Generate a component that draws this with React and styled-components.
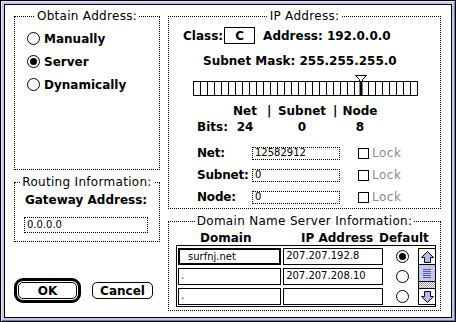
import React from "react";
import styled, { createGlobalStyle } from "styled-components";

const GlobalStyle = createGlobalStyle`
  html, body { margin: 0; padding: 0; background: #fff; }
  body { font-family: "DejaVu Sans", sans-serif; color: #000; }
`;

// window frame
const Window = styled.div`
  box-sizing: border-box;
  width: 456px;
  height: 322px;
  border: 1px solid #000;
  background: #c4c4ee;
  padding: 3px;
  box-shadow: inset 1px 1px 0 #e8e8ff, inset -1px -1px 0 #7c7cac;
  display: flex;
`;

const Content = styled.div`
  flex: 1;
  border: 1px solid #000;
  background: #fff;
  display: grid;
  grid-template-columns: 146px 273px;
  column-gap: 8px;
  align-items: start;
  padding: 4px 0 0 9px;
`;

const Column = styled.div`
  display: flex;
  flex-direction: column;
  gap: 5px;
`;

const Group = styled.fieldset`
  box-sizing: border-box;
  margin: 0;
  min-width: 0;
  height: ${(p) => p.$h}px;
  border: 1px dotted #000;
  padding: ${(p) => p.$pad || "0"};
`;

const GroupTitle = styled.legend`
  margin: 0 auto;
  padding: 0 2px;
  font-size: 12px;
  line-height: 14px;
  letter-spacing: 0.3px;
`;

const Bold = styled.span`
  font-weight: bold;
  font-size: 12px;
  line-height: 14px;
  white-space: nowrap;
`;

/* radios & checkboxes */
const RadioDot = styled.span`
  box-sizing: border-box;
  flex: none;
  width: 13px;
  height: 13px;
  border: 1px solid #000;
  border-radius: 50%;
  background: #fff;
  display: inline-flex;
  align-items: center;
  justify-content: center;

  &::after {
    content: "";
    width: 7px;
    height: 7px;
    border-radius: 50%;
    background: #000;
    display: ${(p) => (p.$on ? "block" : "none")};
  }
`;

const RadioRow = styled.label`
  display: flex;
  align-items: center;
  gap: 4px;
  height: 23px;
`;

const CheckBox = styled.span`
  box-sizing: border-box;
  width: 11px;
  height: 11px;
  border: 1px solid #000;
  background: #fff;
`;

const Dimmed = styled.span`
  font-size: 12px;
  color: #8c8c8c;
  letter-spacing: 0.5px;
`;

/* left column */
const RadioList = styled.div`
  padding: 4px 0 0 12px;
`;

const GatewayLabel = styled.div`
  text-align: center;
  margin-right: 2px;
`;

const TextField = styled.div`
  box-sizing: border-box;
  width: ${(p) => p.$w}px;
  height: ${(p) => p.$h || 16}px;
  border: ${(p) => (p.$active ? "2px solid #000" : p.$dotted ? "1px dotted #000" : "1px solid #000")};
  padding-left: ${(p) => p.$indent || 2}px;
  font-size: 10px;
  line-height: ${(p) => (p.$h || 16) - 3}px;
  white-space: nowrap;
  overflow: hidden;
`;

const GatewayField = styled(TextField)`
  margin: 9px 0 0 9px;
`;

const ButtonRow = styled.div`
  display: flex;
  align-items: center;
  gap: 11px;
  margin-top: 31px;
`;

const DefaultRing = styled.div`
  box-sizing: border-box;
  width: 67px;
  height: 25px;
  border: 3px solid #000;
  border-radius: 9px;
  padding: 1px;
  display: flex;
`;

const Button = styled.button`
  box-sizing: border-box;
  flex: ${(p) => (p.$fill ? 1 : "none")};
  width: ${(p) => (p.$w ? `${p.$w}px` : "auto")};
  height: ${(p) => (p.$h ? `${p.$h}px` : "auto")};
  margin: 0;
  padding: 0;
  border: 1px solid #000;
  border-radius: 5px;
  background: #fff;
  color: #000;
  font-family: "DejaVu Sans", sans-serif;
  font-weight: bold;
  font-size: 12px;
  cursor: pointer;
`;

/* IP address group */
const Row = styled.div`
  display: flex;
  align-items: center;
  margin-top: ${(p) => p.$top || 0}px;
  padding-left: ${(p) => p.$indent || 0}px;
`;

const ClassBox = styled.span`
  box-sizing: border-box;
  width: 31px;
  height: 17px;
  margin: 0 8px 0 1px;
  border: 1px solid #000;
  display: inline-flex;
  align-items: center;
  justify-content: center;
  font-weight: bold;
  font-size: 12px;
`;

const SliderWrap = styled.div`
  position: relative;
  width: 225px;
  margin: 7px 0 0 24px;
  padding-top: 6px;
`;

const Track = styled.div`
  box-sizing: border-box;
  height: 15px;
  border: 1px solid #000;
  background: repeating-linear-gradient(to right, #fff 0 6px, #000 6px 7px);
`;

const Marker = styled.svg`
  position: absolute;
  left: 162px;
  top: 0;
`;

const BitsGrid = styled.div`
  display: grid;
  grid-template-columns: 26px 44px 4px 62px 4px 46px;
  row-gap: 2px;
  margin: 8px 0 8px 0;
  padding-left: 28px;
  font-weight: bold;
  font-size: 12px;
  line-height: 14px;
`;

const Cell = styled.span`
  text-align: ${(p) => p.$align || "center"};
  white-space: nowrap;
`;

const FieldRow = styled.div`
  display: flex;
  align-items: center;
  height: 22px;
  padding-left: 28px;
`;

const FieldLabel = styled(Bold)`
  width: 55px;
  letter-spacing: -0.2px;
`;

const LockBox = styled.span`
  display: flex;
  align-items: center;
  gap: 3px;
  margin-left: 18px;
`;

/* DNS group */
const HeadRow = styled.div`
  display: flex;
  margin: 3px 0 0 31px;
  font-weight: bold;
  font-size: 12px;
  line-height: 14px;
`;

const HeadCell = styled.span`
  width: ${(p) => (p.$w ? `${p.$w}px` : "auto")};
  white-space: nowrap;
`;

const Table = styled.div`
  box-sizing: border-box;
  width: 260px;
  margin-left: 7px;
  border: 1px solid #000;
  padding: 2px 0 1px 1px;
  display: flex;
`;

const Rows = styled.div`
  display: flex;
  flex-direction: column;
  gap: 3px;
  width: 240px;
`;

const DnsRow = styled.div`
  display: flex;
  align-items: center;
  gap: 2px;
  height: 17px;
`;

const RadioCell = styled.div`
  width: 33px;
  display: flex;
  justify-content: center;
  padding-left: 2px;
  box-sizing: border-box;
`;

const ScrollBar = styled.div`
  box-sizing: border-box;
  width: 17px;
  border: 1px solid #000;
  border-right: none;
  display: flex;
  flex-direction: column;
`;

const Arrow = styled.div`
  height: ${(p) => p.$h}px;
  display: flex;
  align-items: center;
  justify-content: center;
  border-${(p) => (p.$down ? "top" : "bottom")}: 1px solid #000;
  background: #fff;
`;

const Thumb = styled.div`
  height: 16px;
  border-bottom: 1px solid #000;
  background: #c6c6f4;
  display: flex;
  align-items: center;
  justify-content: center;

  &::after {
    content: "";
    width: 8px;
    height: 9px;
    background: repeating-linear-gradient(to bottom, #5a5a9a 0 1px, transparent 1px 2px);
  }
`;

const ScrollTrack = styled.div`
  flex: 1;
  background: repeating-conic-gradient(#9a9a9a 0 25%, #fff 0 50%) 0 0 / 2px 2px;
`;

const ArrowIcon = ({ down }) => (
  <svg width="13" height="12" viewBox="0 0 13 12" style={{ transform: down ? "rotate(180deg)" : "none" }}>
    <path d="M6.5 0.5L12.5 6.5H9.5V11.5H3.5V6.5H0.5Z" fill="#b8b8f0" stroke="#000" />
  </svg>
);

const dnsRows = [
  { domain: "surfnj.net", ip: "207.207.192.8", def: true, active: true },
  { domain: ".", ip: "207.207.208.10" },
  { domain: ".", ip: "" },
];

const fields = [
  ["Net:", "12582912"],
  ["Subnet:", "0"],
  ["Node:", "0"],
];

export default function App() {
  return (
    <>
      <GlobalStyle />
      <Window>
        <Content>
          <Column>
            <Group $h={161}>
              <GroupTitle>Obtain Address:</GroupTitle>
              <RadioList>
                <RadioRow>
                  <RadioDot />
                  <Bold>Manually</Bold>
                </RadioRow>
                <RadioRow>
                  <RadioDot $on />
                  <Bold>Server</Bold>
                </RadioRow>
                <RadioRow>
                  <RadioDot />
                  <Bold>Dynamically</Bold>
                </RadioRow>
              </RadioList>
            </Group>

            <Group $h={67}>
              <GroupTitle>Routing Information:</GroupTitle>
              <GatewayLabel>
                <Bold>Gateway Address:</Bold>
              </GatewayLabel>
              <GatewayField $w={124} $dotted>0.0.0.0</GatewayField>
            </Group>

            <ButtonRow>
              <DefaultRing>
                <Button $fill>OK</Button>
              </DefaultRing>
              <Button $w={61} $h={17}>Cancel</Button>
            </ButtonRow>
          </Column>

          <Column>
            <Group $h={200}>
              <GroupTitle>IP Address:</GroupTitle>
              <Row $top={4} $indent={14}>
                <Bold>Class:</Bold>
                <ClassBox>C</ClassBox>
                <Bold>Address: 192.0.0.0</Bold>
              </Row>
              <Row $top={10} $indent={34}>
                <Bold>Subnet Mask: 255.255.255.0</Bold>
              </Row>
              <SliderWrap>
                <Track />
                <Marker width="12" height="21" viewBox="0 0 12 21">
                  <path d="M0.5 0.5H11.5L7.5 4.5V6.5H4.5V4.5Z" fill="#fff" stroke="#000" />
                  <rect x="4.5" y="6" width="3" height="15" fill="#000" />
                </Marker>
              </SliderWrap>
              <BitsGrid>
                <Cell />
                <Cell>Net</Cell>
                <Cell>|</Cell>
                <Cell>Subnet</Cell>
                <Cell>|</Cell>
                <Cell>Node</Cell>
                <Cell $align="left">Bits:</Cell>
                <Cell>24</Cell>
                <Cell />
                <Cell>0</Cell>
                <Cell />
                <Cell>8</Cell>
              </BitsGrid>
              {fields.map(([label, value]) => (
                <FieldRow key={label}>
                  <FieldLabel>{label}</FieldLabel>
                  <TextField $w={88} $h={13} $dotted>
                    {value}
                  </TextField>
                  <LockBox>
                    <CheckBox />
                    <Dimmed>Lock</Dimmed>
                  </LockBox>
                </FieldRow>
              ))}
            </Group>

            <Group $h={97}>
              <GroupTitle>Domain Name Server Information:</GroupTitle>
              <HeadRow>
                <HeadCell $w={101}>Domain</HeadCell>
                <HeadCell $w={78}>IP Address</HeadCell>
                <HeadCell>Default</HeadCell>
              </HeadRow>
              <Table>
                <Rows>
                  {dnsRows.map((r, i) => (
                    <DnsRow key={i}>
                      <TextField $w={104} $h={17} $active={r.active} $indent={r.active ? 8 : 2}>
                        {r.domain}
                      </TextField>
                      <TextField $w={101} $h={17}>
                        {r.ip}
                      </TextField>
                      <RadioCell>
                        <RadioDot $on={r.def} />
                      </RadioCell>
                    </DnsRow>
                  ))}
                </Rows>
                <ScrollBar>
                  <Arrow $h={15}>
                    <ArrowIcon />
                  </Arrow>
                  <Thumb />
                  <ScrollTrack />
                  <Arrow $h={15} $down>
                    <ArrowIcon down />
                  </Arrow>
                </ScrollBar>
              </Table>
            </Group>
          </Column>
        </Content>
      </Window>
    </>
  );
}
